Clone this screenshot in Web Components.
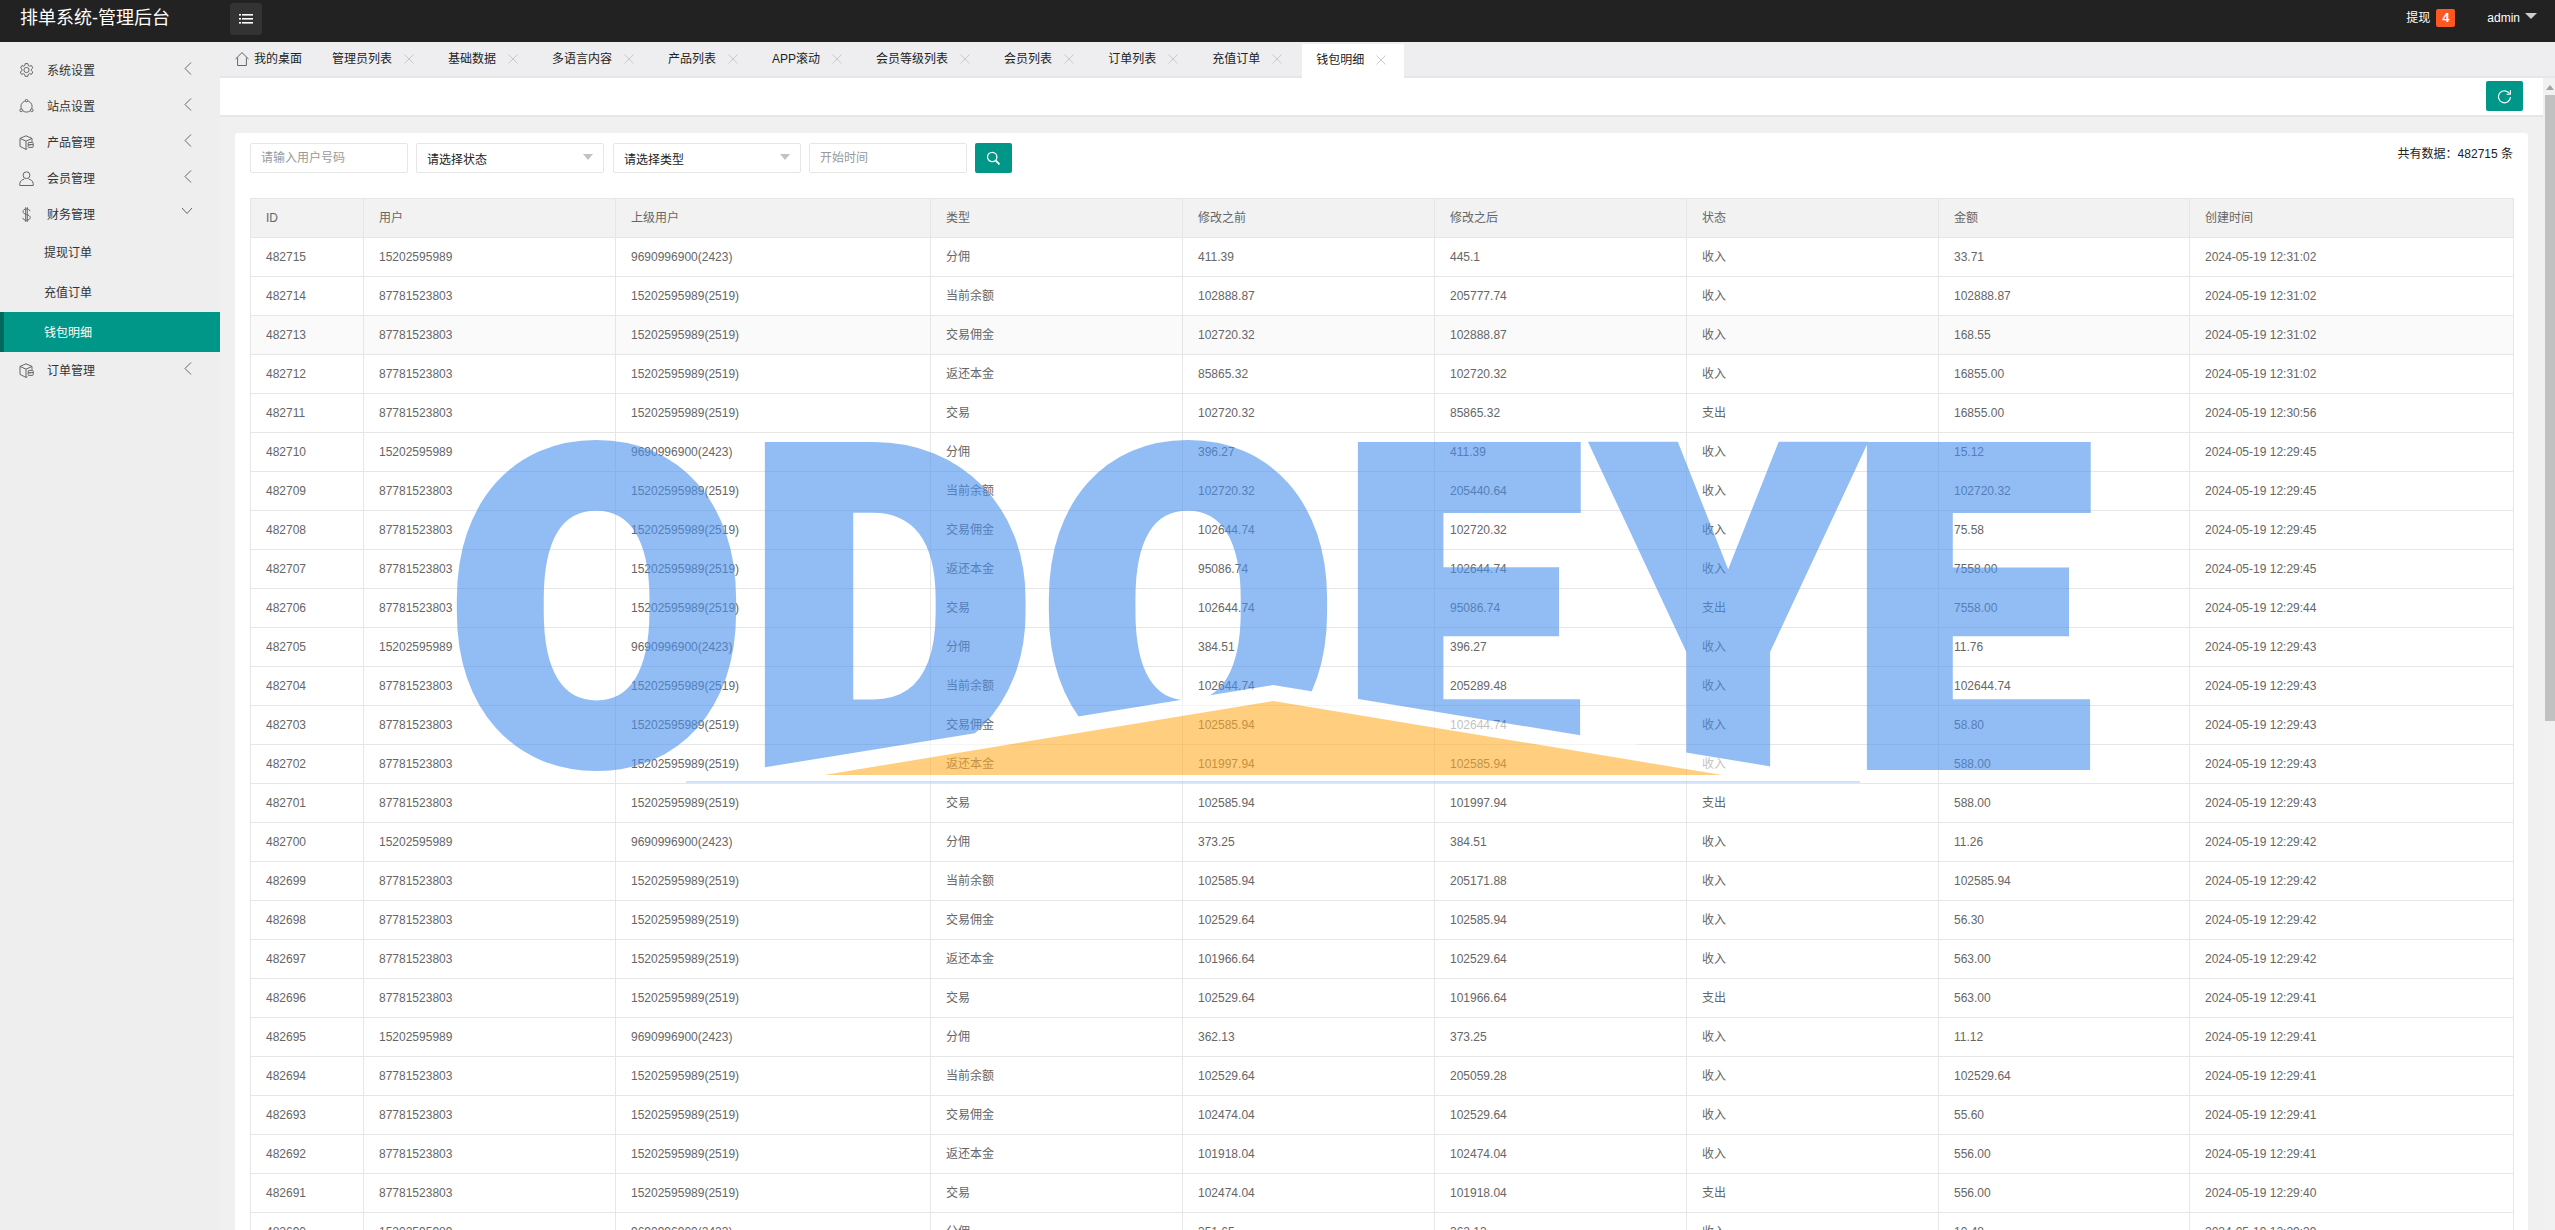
<!DOCTYPE html>
<html lang="zh-CN">
<head>
<meta charset="utf-8">
<title>排单系统-管理后台</title>
<style>
  html, body { margin: 0; height: 100%; overflow: hidden; }
  body { font: 12px/20px "Liberation Sans", "Noto Sans CJK SC", sans-serif; color: #333; background: #f0f0f0; }
</style>
</head>
<body>
<admin-shell>
  <app-header slot="header"></app-header>
  <side-nav slot="side">
    <nav-item icon="gear" arrow="left">系统设置</nav-item>
    <nav-item icon="nodes" arrow="left">站点设置</nav-item>
    <nav-item icon="box" arrow="left">产品管理</nav-item>
    <nav-item icon="user" arrow="left">会员管理</nav-item>
    <nav-item icon="dollar" arrow="down">财务管理</nav-item>
    <nav-sub>提现订单</nav-sub>
    <nav-sub>充值订单</nav-sub>
    <nav-sub active>钱包明细</nav-sub>
    <nav-item icon="box" arrow="left">订单管理</nav-item>
  </side-nav>
  <tab-bar slot="tabs">
    <tab-item home>我的桌面</tab-item>
    <tab-item>管理员列表</tab-item>
    <tab-item>基础数据</tab-item>
    <tab-item>多语言内容</tab-item>
    <tab-item>产品列表</tab-item>
    <tab-item>APP滚动</tab-item>
    <tab-item>会员等级列表</tab-item>
    <tab-item>会员列表</tab-item>
    <tab-item>订单列表</tab-item>
    <tab-item>充值订单</tab-item>
    <tab-item active>钱包明细</tab-item>
  </tab-bar>
  <tool-bar slot="pane"></tool-bar>
  <content-card slot="pane">
    <filter-form></filter-form>
    <wallet-table></wallet-table>
  </content-card>
  <scroll-rail slot="rail"></scroll-rail>
  <odoeye-mark slot="over"></odoeye-mark>
</admin-shell>

<script>
const el = (name, css, html, init) => customElements.define(name, class extends HTMLElement {
  constructor() {
    super();
    const r = this.attachShadow({ mode: 'open' });
    r.innerHTML = `<style>${css}</style>` + (typeof html === 'function' ? html(this) : html);
  }
  connectedCallback() { if (init) init(this); }
});

const ICONS = {
  gear: '<path d="M6.1 .6h2.8l.4 1.9 1.3.7 1.8-.7 1.4 2.4-1.4 1.3v1.5l1.4 1.3-1.4 2.4-1.8-.7-1.3.7-.4 1.9H6.1l-.4-1.9-1.3-.7-1.8.7-1.4-2.4L3 7.7V6.2L1.6 4.9 3 2.5l1.8.7 1-.7z"/><circle cx="7.5" cy="7" r="2.6"/>',
  nodes: '<circle cx="7.5" cy="7.5" r="5.6"/><circle cx="7.5" cy="1.6" r="1.2" fill="#eee"/><circle cx="2.2" cy="11.3" r="1.4" fill="#eee"/><circle cx="12.8" cy="11.3" r="1.4" fill="#eee"/>',
  box: '<path d="M7 .8 13 3.4v3.4M7 .8 1 3.4v8l6 3 1.4-.7M1 3.4l6 2.8 6-2.8M7 6.2v8.2"/><rect x="9.2" y="7.4" width="5" height="5" rx=".8"/><path d="M9.2 9.6h5M11 9.6v1"/>',
  user: '<circle cx="7.5" cy="4.2" r="3.4"/><path d="M.8 14.5v-1.7C.8 10 3.4 8.4 5.2 8.2M14.2 14.5v-1.7C14.2 10 11.6 8.4 9.8 8.2M.8 14.5h13.4"/>',
  dollar: '<path d="M11 4.2C10.6 2.6 9.2 2 7.5 2 5.4 2 4 3 4 4.6c0 3.6 7.2 2.2 7.2 6 0 1.6-1.6 2.6-3.7 2.6-2 0-3.4-.8-3.8-2.4"/><path d="M6.7 .3v14.6M8.3 .3v14.6"/>'
};

el('admin-shell', `
  :host { display: grid; grid-template: 42px 36px 1fr / 220px 1fr; height: 100vh; position: relative; overflow: hidden; }
  ::slotted([slot=header]) { grid-column: 1 / 3; }
  ::slotted([slot=side]) { grid-row: 2 / 4; }
  .body { display: flex; min-height: 0; min-width: 0; overflow: hidden; }
  .pane { flex: 1; min-width: 0; overflow: hidden; background: #f0f0f0; }
  .rail { width: 12px; flex: none; display: flex; }
`, `<slot name="header"></slot><slot name="side"></slot><slot name="tabs"></slot>
    <div class="body"><div class="pane"><slot name="pane"></slot></div><div class="rail"><slot name="rail"></slot></div></div>
    <slot name="over"></slot>`);

el('app-header', `
  :host { display: flex; align-items: center; height: 42px; background: #222; color: #fff; }
  .logo { width: 210px; padding-left: 20px; box-sizing: border-box; font-size: 18px; line-height: 36px; margin-bottom: 6px; white-space: nowrap; }
  .tog { margin: 0 0 4px 20px; width: 32px; height: 32px; background: #333; border-radius: 3px; display: flex; align-items: center; justify-content: center; }
  .sp { flex: 1; }
  .r { display: flex; align-items: center; margin-bottom: 6px; }
  .badge { margin-left: 6px; width: 19px; height: 18px; background: #ff5722; border-radius: 2px; text-align: center; font: bold 13px/18px "Liberation Sans", sans-serif; }
  .adm { margin-left: 32px; }
  .caret { margin: 0 18px 4px 5px; width: 0; height: 0; border: 6px solid transparent; border-top: 6px solid #ccc; border-bottom: 0; }
`, `<div class="logo">排单系统-管理后台</div>
    <div class="tog"><svg width="14" height="10" viewBox="0 0 14 10" fill="#fff"><rect x="0" y="0" width="2" height="1.6"/><rect x="3" y="0" width="11" height="1.6"/><rect x="0" y="4" width="2" height="1.6"/><rect x="3" y="4" width="11" height="1.6"/><rect x="0" y="8" width="2" height="1.6"/><rect x="3" y="8" width="11" height="1.6"/></svg></div>
    <div class="sp"></div>
    <div class="r"><span>提现</span><span class="badge">4</span><span class="adm">admin</span><span class="caret"></span></div>`);

el('side-nav', `
  :host { display: block; background: #eee; padding-top: 10px; overflow: hidden; }
`, `<slot></slot>`);

el('nav-item', `
  :host { display: flex; align-items: center; height: 36px; color: #333; }
  svg.i { width: 15px; height: 15px; margin-left: 19px; fill: none; stroke: #666; stroke-width: 1; flex: none; }
  .t { margin-left: 13px; flex: 1; line-height: 20px; padding-top: 1px; }
  svg.a { fill: none; stroke: #666; stroke-width: 1; flex: none; }
  svg.left { width: 8px; height: 13px; margin: 0 28px 3px 0; }
  svg.down { width: 12px; height: 8px; margin: 0 27px 6px 0; }
`, h => `<svg class="i" viewBox="0 0 15 15">${ICONS[h.getAttribute('icon')]}</svg><span class="t"><slot></slot></span>` +
  (h.getAttribute('arrow') === 'left'
    ? '<svg class="a left" viewBox="0 0 8 13"><path d="M7 .5 1 6.5l6 6"/></svg>'
    : '<svg class="a down" viewBox="0 0 12 8"><path d="M1 1l5 5.5L11 1"/></svg>'));

el('nav-sub', `
  :host { display: block; height: 40px; line-height: 42px; padding-left: 44px; color: #333; box-sizing: border-box; }
  :host([active]) { background: #009688; color: #fff; border-left: 4px solid #00695c; padding-left: 40px; }
`, `<slot></slot>`);

el('tab-bar', `
  :host { display: flex; height: 36px; box-sizing: border-box; background: #eeeef0; border-bottom: 2px solid #e6e6e6; }
`, `<slot></slot>`);

el('tab-item', `
  :host { display: flex; align-items: center; height: 34px; padding: 0 20px 0 14px; color: #222; white-space: nowrap; line-height: 20px; }
  :host([home]) { padding: 0 16px 0 15px; }
  :host([active]) { background: #fff; margin-top: 2px; padding-bottom: 2px; padding-right: 18px; margin-right: 2px; height: 32px; }
  svg.x { width: 10px; height: 10px; margin-left: 12px; stroke: #c9c9c9; stroke-width: 1; fill: none; }
  svg.h { width: 14px; height: 14px; margin-right: 5px; stroke: #666; stroke-width: 1; fill: none; }
`, h => h.hasAttribute('home')
  ? '<svg class="h" viewBox="0 0 14 14"><path d="M.5 7 7 .6 13.5 7M2.6 5.6v7.9h8.8V5.6"/></svg><slot></slot>'
  : '<slot></slot><svg class="x" viewBox="0 0 10 10"><path d="M.5.5l9 9M9.500 .5l-9 9"/></svg>');

el('tool-bar', `
  :host { display: flex; justify-content: flex-end; align-items: flex-start; height: 39px; box-sizing: border-box; background: #fff; border-bottom: 2px solid #e6e6e6; padding: 3px 20px 0 0; }
  .b { width: 37px; height: 30px; background: #009688; border-radius: 2px; display: flex; align-items: center; justify-content: center; }
`, `<div class="b"><svg width="15" height="15" viewBox="0 0 15 15" fill="none" stroke="#fff" stroke-width="1.2"><path d="M12.6 4.600A6 6 0 1 0 13.500 8"/><path d="M13.400 1.300v3.900H9.500" stroke-width="1.100"/></svg></div>`);

el('content-card', `
  :host { display: block; margin: 16px 15px 0; padding: 10px 15px 0; background: #fff; border-radius: 3px 3px 0 0; }
`, `<slot></slot>`);

el('filter-form', `
  :host { display: flex; gap: 8px; height: 30px; margin-bottom: 25px; align-items: stretch; }
  .f { box-sizing: border-box; border: 1px solid #e6e6e6; border-radius: 2px; background: #fff; display: flex; align-items: center; position: relative; }
  .ph { color: #999; padding-bottom: 1px; }
  .u { width: 158px; padding-left: 10px; }
  .s { width: 188px; padding-left: 10px; justify-content: space-between; color: #222; }
  .s span { padding-top: 3px; }
  .s + .s { margin-left: 1px; }
  .s i { width: 0; height: 0; border: 5.500px solid transparent; border-top: 6px solid #c2c2c2; border-bottom: 0; margin: 0 10px 2px 0; }
  .d { width: 158px; padding-left: 10px; }
  .btn { width: 37px; background: #009688; border-radius: 2px; display: flex; align-items: center; justify-content: center; }
  .tot { margin-left: auto; line-height: 20px; padding-top: 1px; color: #222; }
`, `<div class="f u"><span class="ph">请输入用户号码</span></div>
    <div class="f s"><span>请选择状态</span><i></i></div>
    <div class="f s"><span>请选择类型</span><i></i></div>
    <div class="f d"><span class="ph">开始时间</span></div>
    <div class="btn"><svg width="15" height="15" viewBox="0 0 15 15" fill="none" stroke="#fff" stroke-width="1.300"><circle cx="6.200" cy="6" r="4.700"/><path d="M9.800 9.600l3.700 3.800" stroke-width="1.800"/></svg></div>
    <div class="tot">共有数据：482715 条</div>`);

const A = '15202595989', B = '87781523803', PA = '9690996900(2423)', PB = '15202595989(2519)', D = '2024-05-19 ';
const ROWS = [
  [482715,A,PA,'分佣','411.39','445.1','收入','33.71','12:31:02'],
  [482714,B,PB,'当前余额','102888.87','205777.74','收入','102888.87','12:31:02'],
  [482713,B,PB,'交易佣金','102720.32','102888.87','收入','168.55','12:31:02'],
  [482712,B,PB,'返还本金','85865.32','102720.32','收入','16855.00','12:31:02'],
  [482711,B,PB,'交易','102720.32','85865.32','支出','16855.00','12:30:56'],
  [482710,A,PA,'分佣','396.27','411.39','收入','15.12','12:29:45'],
  [482709,B,PB,'当前余额','102720.32','205440.64','收入','102720.32','12:29:45'],
  [482708,B,PB,'交易佣金','102644.74','102720.32','收入','75.58','12:29:45'],
  [482707,B,PB,'返还本金','95086.74','102644.74','收入','7558.00','12:29:45'],
  [482706,B,PB,'交易','102644.74','95086.74','支出','7558.00','12:29:44'],
  [482705,A,PA,'分佣','384.51','396.27','收入','11.76','12:29:43'],
  [482704,B,PB,'当前余额','102644.74','205289.48','收入','102644.74','12:29:43'],
  [482703,B,PB,'交易佣金','102585.94','102644.74','收入','58.80','12:29:43'],
  [482702,B,PB,'返还本金','101997.94','102585.94','收入','588.00','12:29:43'],
  [482701,B,PB,'交易','102585.94','101997.94','支出','588.00','12:29:43'],
  [482700,A,PA,'分佣','373.25','384.51','收入','11.26','12:29:42'],
  [482699,B,PB,'当前余额','102585.94','205171.88','收入','102585.94','12:29:42'],
  [482698,B,PB,'交易佣金','102529.64','102585.94','收入','56.30','12:29:42'],
  [482697,B,PB,'返还本金','101966.64','102529.64','收入','563.00','12:29:42'],
  [482696,B,PB,'交易','102529.64','101966.64','支出','563.00','12:29:41'],
  [482695,A,PA,'分佣','362.13','373.25','收入','11.12','12:29:41'],
  [482694,B,PB,'当前余额','102529.64','205059.28','收入','102529.64','12:29:41'],
  [482693,B,PB,'交易佣金','102474.04','102529.64','收入','55.60','12:29:41'],
  [482692,B,PB,'返还本金','101918.04','102474.04','收入','556.00','12:29:41'],
  [482691,B,PB,'交易','102474.04','101918.04','支出','556.00','12:29:40'],
  [482690,A,PA,'分佣','351.65','362.13','收入','10.48','12:29:39']
];
const COLS = [113,252,315,252,252,252,252,251,324];
el('wallet-table', `
  :host { display: block; }
  table { border-collapse: collapse; table-layout: fixed; width: 2263px; color: #666; }
  th, td { border: 1px solid #e6e6e6; padding: 9px 15px; height: 20px; line-height: 20px; font-weight: 400; text-align: left; font-size: 12px; white-space: nowrap; }
  th { background: #f2f2f2; }
  tr.hover td { background: #fafafa; }
`, () => `<table><colgroup>${COLS.map(w => `<col style="width:${w}px">`).join('')}</colgroup>
  <thead><tr>${['ID','用户','上级用户','类型','修改之前','修改之后','状态','金额','创建时间'].map(t => `<th>${t}</th>`).join('')}</tr></thead>
  <tbody>${ROWS.map(r => `<tr${r[0] === 482713 ? ' class="hover"' : ''}>${r.map((c, i) => `<td>${i === 8 ? D + c : c}</td>`).join('')}</tr>`).join('')}</tbody></table>`);

el('scroll-rail', `
  :host { display: block; width: 12px; background: #f1f1f1; position: relative; }
  .up { display: block; width: 0; height: 0; border: 4px solid transparent; border-bottom: 5px solid #a3a3a3; border-top: 0; margin: 7px 0 0 3px; }
  .th { margin: 5px 0 0 2px; width: 10px; height: 626px; background: #c1c1c1; }
`, `<span class="up"></span><div class="th"></div>`);

const FONT = '900 100px Roboto, Inter, "Liberation Sans", sans-serif';
const LETTERS = [
  ['O', 455, 738, 436, 771],
  ['D', 763, 1029, 438, 770],
  ['O', 1047, 1329, 436, 771],
  ['E', 1356, 1583, 438, 770],
  ['Y', 1588, 1865, 438, 770],
  ['E', 1865, 2093, 438, 770]
];
const SW = 12;
el('odoeye-mark', `
  :host { position: absolute; left: 0; top: 0; pointer-events: none; display: block; }
  svg { display: block; }
  text { font: ${FONT}; fill: #4a91ee; stroke: #4a91ee; stroke-width: ${SW}px; vector-effect: non-scaling-stroke; stroke-linejoin: miter; }
`, `<svg width="2555" height="1230" viewBox="0 0 2555 1230"><g opacity="0.6">
    <g id="ls"></g>
    <polygon points="1273,685 686,780 686,783 1860,783 1860,781" fill="#fff"/>
    <rect x="686" y="781" width="1174" height="2" fill="#b5cff5"/>
    <polygon points="1273,701 824,775 1722,775" fill="#ffaf2b"/>
  </g></svg>`, h => {
    const g = h.shadowRoot.getElementById('ls');
    const ctx = document.createElement('canvas').getContext('2d');
    ctx.font = FONT;
    LETTERS.forEach(([c, x0, x1, y0, y1]) => {
      const m = ctx.measureText(c);
      const w = m.actualBoundingBoxRight + m.actualBoundingBoxLeft;
      const ht = m.actualBoundingBoxAscent + m.actualBoundingBoxDescent;
      const sx = (x1 - x0 - SW) / w, sy = (y1 - y0 - SW) / ht;
      const tx = x0 + SW / 2 + m.actualBoundingBoxLeft * sx;
      const ty = y0 + SW / 2 + m.actualBoundingBoxAscent * sy;
      const t = document.createElementNS('http://www.w3.org/2000/svg', 'text');
      t.setAttribute('transform', `translate(${tx} ${ty}) scale(${sx} ${sy})`);
      t.textContent = c;
      g.appendChild(t);
    });
  });
</script>
</body>
</html>
